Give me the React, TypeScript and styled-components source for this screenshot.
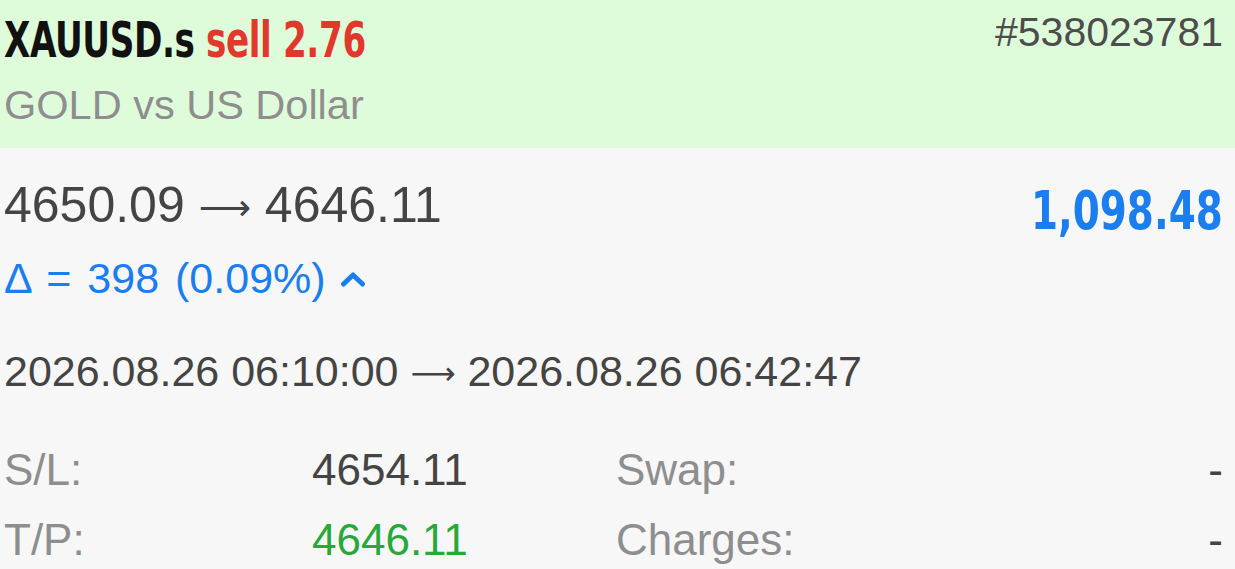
import React from 'react'
import styled, { createGlobalStyle } from 'styled-components'

const GlobalStyle = createGlobalStyle`
    body {
        margin: 0;
        background: #f7f7f7;
        font-family: 'Liberation Sans', Arial, sans-serif;
        overflow: hidden;
    }
`

const Page = styled.div`
    width: 1235px;
    height: 569px;
    overflow: hidden;
`

const Header = styled.div`
    height: 148px;
    box-sizing: border-box;
    background: #dffcda;
    padding: 8px 12px 0 4px;
    display: grid;
    grid-template-columns: 1fr auto;
    align-items: start;
`

// no narrow bold face installed, so squeeze the condensed one
const TitleLine = styled.div`
    display: inline-block;
    margin-top: 4px;
    font-family: 'DejaVu Sans Condensed', 'DejaVu Sans', sans-serif;
    font-weight: bold;
    font-size: 50px;
    line-height: 56px;
    letter-spacing: -0.5px;
    white-space: nowrap;
    transform: scaleX(0.76);
    transform-origin: left center;
`

const Symbol = styled.span`
    color: #111;
`

const Side = styled.span`
    color: #e2382c;
`

const Description = styled.div`
    margin-top: 13px;
    font-size: 41.5px;
    line-height: 48px;
    color: #8e8e8e;
`

const Ticket = styled.div`
    font-size: 41px;
    line-height: 48px;
    color: #4d4d4d;
`

const Body = styled.div`
    padding: 28px 12px 0 4px;
`

const PriceRow = styled.div`
    display: flex;
    justify-content: space-between;
    align-items: flex-start;
`

const Prices = styled.div`
    height: 58px;
    font-size: 50px;
    line-height: 58px;
    color: #444;
    white-space: nowrap;
`

const Arrow = styled.span`
    font-family: 'DejaVu Sans', sans-serif;
    font-size: 0.73em;
    line-height: 1;
    vertical-align: 0.06em;
`

const Delta = styled.div`
    margin-top: 20px;
    font-size: 43px;
    line-height: 48px;
    word-spacing: 4px;
    color: #1a7ef0;
    display: flex;
    align-items: center;
    white-space: nowrap;
`

const Chevron = styled.svg`
    margin-left: 14px;
    margin-top: 2px;
`

const Profit = styled.div`
    margin-top: 6px;
    font-family: 'DejaVu Sans Condensed', 'DejaVu Sans', sans-serif;
    font-weight: bold;
    font-size: 54px;
    line-height: 58px;
    color: #1a7ef0;
    transform: scaleX(0.8);
    transform-origin: right center;
`

const Times = styled.div`
    height: 50px;
    margin-top: 44px;
    font-size: 43px;
    line-height: 50px;
    color: #444;
    white-space: nowrap;
`

const Details = styled.div`
    margin-top: 39px;
    display: grid;
    grid-template-columns: 308px 304px 1fr auto;
    grid-auto-rows: 70px;
    align-items: center;
    font-size: 44px;
`

const Label = styled.div`
    color: #8e8e8e;
`

const Value = styled.div<{ $tone?: 'green' }>`
    color: ${(p) => (p.$tone === 'green' ? '#28a83a' : '#444')};
`

const Dash = styled.div`
    color: #444;
    text-align: right;
`

const App: React.FC = () => {
    return (
        <Page>
            <GlobalStyle />
            <Header>
                <div>
                    <TitleLine>
                        <Symbol>XAUUSD.s</Symbol> <Side>sell 2.76</Side>
                    </TitleLine>
                    <Description>GOLD vs US Dollar</Description>
                </div>
                <Ticket>#538023781</Ticket>
            </Header>
            <Body>
                <PriceRow>
                    <div>
                        <Prices>
                            4650.09 <Arrow>⟶</Arrow> 4646.11
                        </Prices>
                        <Delta>
                            Δ = 398 (0.09%)
                            <Chevron width="26" height="18" viewBox="0 0 26 18">
                                <path
                                    d="M3.5 14 L13 5 L22.5 14"
                                    fill="none"
                                    stroke="#1a7ef0"
                                    strokeWidth="5"
                                    strokeLinecap="round"
                                    strokeLinejoin="round"
                                />
                            </Chevron>
                        </Delta>
                    </div>
                    <Profit>1,098.48</Profit>
                </PriceRow>
                <Times>
                    2026.08.26 06:10:00 <Arrow>⟶</Arrow> 2026.08.26 06:42:47
                </Times>
                <Details>
                    <Label>S/L:</Label>
                    <Value>4654.11</Value>
                    <Label>Swap:</Label>
                    <Dash>-</Dash>
                    <Label>T/P:</Label>
                    <Value $tone="green">4646.11</Value>
                    <Label>Charges:</Label>
                    <Dash>-</Dash>
                </Details>
            </Body>
        </Page>
    )
}

export default App
